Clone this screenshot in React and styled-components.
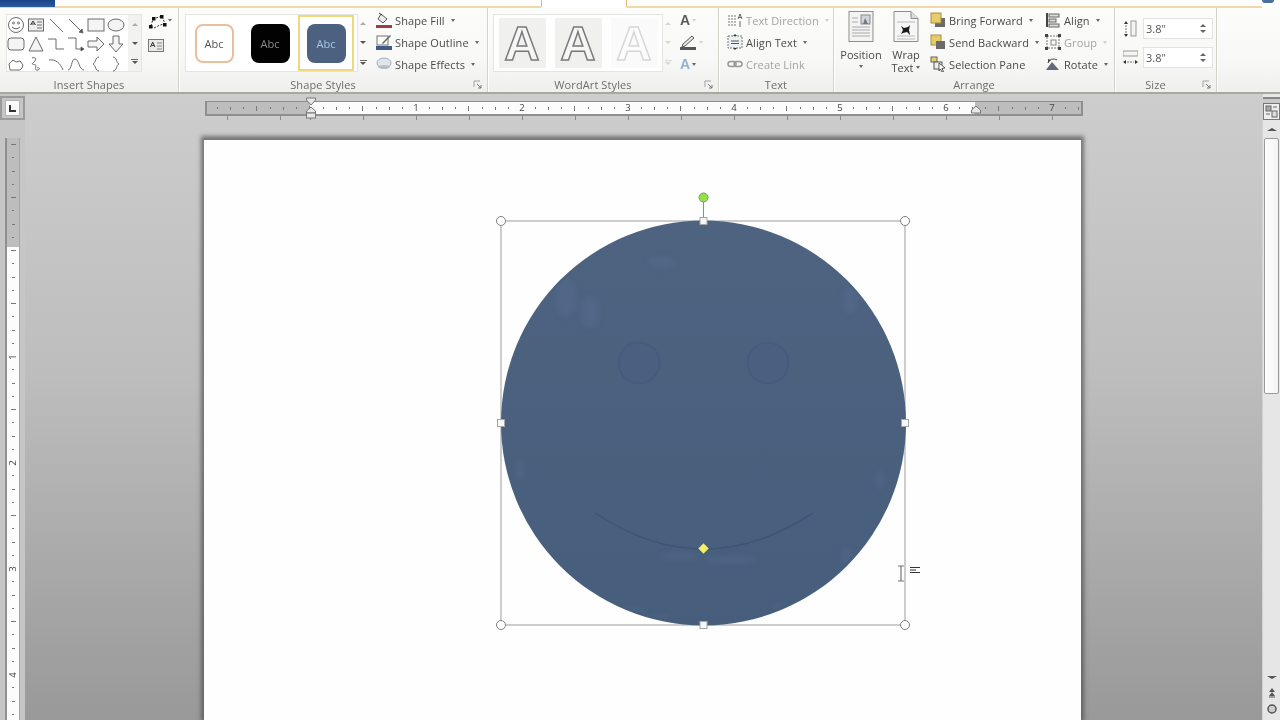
import styled, { createGlobalStyle } from "styled-components";

const GlobalStyle = createGlobalStyle`
  html, body {
    margin: 0;
    padding: 0;
    background: #bbb;
    font-family: "Open Sans", "Liberation Sans", sans-serif;
  }
`;

const Screen = styled.div`
  width: 1280px;
  height: 720px;
  overflow: hidden;
  display: flex;
  flex-direction: column;
`;

const TabStrip = styled.div`
  height: 8px;
  flex: none;
  display: flex;
  background: #fdfdfb;
  overflow: hidden;
`;

const FileTab = styled.div`
  width: 55px;
  background: linear-gradient(180deg, #1c4488, #2a5a9e);
  border-bottom: 1px solid #f0d6a8;
`;

const TabLine = styled.div`
  flex: ${({ $width }) => ($width ? `0 0 ${$width}px` : 1)};
  display: flex;
  border-bottom: 2px solid ${({ $open }) => ($open ? "transparent" : "#f2d7aa")};
  border-left: ${({ $open }) => ($open ? "1px solid #e2b878" : "none")};
  border-right: ${({ $open }) => ($open ? "1px solid #e2b878" : "none")};
  box-sizing: border-box;
  background: ${({ $open }) => ($open ? "#fff" : "transparent")};
`;

const HelpDot = styled.div`
  width: 12px;
  height: 3px;
  margin: 0 6px 0 0;
  border-radius: 0 0 6px 6px;
  background: #47709c;
`;

const Ribbon = styled.div`
  height: 86px;
  flex: none;
  display: flex;
  background: linear-gradient(180deg, #fcfcfb 0%, #f8f8f7 60%, #efefec 100%);
  border-bottom: 2px solid #a9a89c;
  box-sizing: border-box;
  filter: blur(0.35px);
`;

const Group = styled.div`
  width: ${({ $width }) => $width}px;
  flex: none;
  box-sizing: border-box;
  position: relative;
  display: flex;
  flex-direction: column;
  border-right: 1px solid #d4d3cb;
  box-shadow: 1px 0 0 #fff;
`;

const GroupBody = styled.div`
  height: 70px;
  flex: none;
  box-sizing: border-box;
  display: flex;
  align-items: flex-start;
  padding: 2px 0 0 ${({ $left }) => $left || 0}px;
`;

const GroupLabel = styled.div`
  height: 14px;
  line-height: 14px;
  text-align: center;
  font-size: 11px;
  letter-spacing: 0.1px;
  color: #6d6d6d;
  padding-right: ${({ $shift }) => $shift || 0}px;
`;

const Launcher = styled.svg`
  position: absolute;
  right: 5px;
  bottom: 3px;
  width: 9px;
  height: 9px;
`;

const GalleryBox = styled.div`
  margin: 4px 0 0 ${({ $left }) => $left || 0}px;
  height: 58px;
  flex: none;
  box-sizing: border-box;
  display: flex;
  background: #fff;
  border: 1px solid #e4e4e2;
  padding-right: ${({ $right }) => $right || 0}px;
`;

const ShapeGrid = styled.div`
  width: 121px;
  box-sizing: border-box;
  display: grid;
  grid-template-columns: repeat(6, 20px);
  grid-auto-rows: 19.6px;
  align-items: center;
  justify-items: start;
`;

const Scroller = styled.div`
  width: ${({ $plain }) => ($plain ? 10 : 13)}px;
  height: ${({ $outside }) => ($outside ? "58px" : "auto")};
  margin-top: ${({ $outside }) => ($outside ? "4px" : 0)};
  flex: none;
  display: flex;
  flex-direction: column;
  background: ${({ $plain }) => ($plain ? "transparent" : "#f2f2f0")};
`;

const ScrollCell = styled.div`
  flex: 1;
  display: flex;
  flex-direction: column;
  align-items: center;
  justify-content: center;
  gap: 1px;
  &:before {
    content: "";
    display: ${({ $bar }) => ($bar ? "block" : "none")};
    width: 7px;
    height: 1px;
    background: ${({ $faint }) => ($faint ? "#d8d8d8" : "#666")};
  }
`;

const Tri = styled.span`
  display: block;
  width: 0;
  height: 0;
  border-left: ${({ $size }) => $size || 3}px solid transparent;
  border-right: ${({ $size }) => $size || 3}px solid transparent;
  ${({ $up, $color }) =>
    $up
      ? `border-bottom: 3px solid ${$color || "#666"};`
      : `border-top: 3px solid ${$color || "#666"};`}
`;

const SideTools = styled.div`
  margin: 4px 0 0 6px;
  display: flex;
  flex-direction: column;
  gap: 6px;
  align-items: flex-start;
`;

const TextBoxGlyph = styled.svg`
  width: 16px;
  height: 13px;
  margin-top: 3px;
`;

const SwatchCell = styled.div`
  width: 56px;
  height: 56px;
  box-sizing: border-box;
  display: flex;
  align-items: center;
  justify-content: center;
  border: 2px solid ${({ $selected }) => ($selected ? "#efd77f" : "transparent")};
`;

const Swatch = styled.div`
  width: 39px;
  height: 39px;
  box-sizing: border-box;
  border-radius: 8px;
  display: flex;
  align-items: center;
  justify-content: center;
  font-size: 11px;
  background: ${({ $bg }) => $bg};
  color: ${({ $fg }) => $fg};
  border: ${({ $line }) => ($line ? `2px solid ${$line}` : "none")};
`;

const CommandList = styled.div`
  margin: -1px 0 0 ${({ $left }) => $left || 0}px;
  display: flex;
  flex-direction: column;
  flex: none;
`;

const Command = styled.div`
  height: 22px;
  display: flex;
  align-items: center;
  gap: 3px;
  font-size: 11px;
  letter-spacing: 0.1px;
  white-space: nowrap;
  color: ${({ $off }) => ($off ? "#a3a3a3" : "#4a4a4a")};
`;

const CommandIcon = styled.svg`
  width: 16px;
  height: 16px;
  flex: none;
`;

const CaretWrap = styled.span`
  margin-left: 3px;
`;

const ArtCell = styled.div`
  width: 47px;
  height: 50px;
  margin: 3px 4.5px;
  background: #f0f0ef;
  display: flex;
  align-items: center;
  justify-content: center;
  font-family: "Liberation Sans", sans-serif;
  font-weight: 700;
  font-size: 49px;
  line-height: 1;
  color: #f6f6f6;
  opacity: ${({ $fade }) => $fade || 1};
  -webkit-text-stroke: 1.5px #7a7a7a;
`;

const ArtTools = styled.div`
  margin: -1px 0 0 7px;
  display: flex;
  flex-direction: column;
`;

const ArtTool = styled.div`
  height: 22px;
  display: flex;
  align-items: center;
  gap: 2px;
  font-family: "Liberation Sans", sans-serif;
  font-weight: 700;
  font-size: 14px;
  color: ${({ $color }) => $color || "#5c5c5c"};
`;

const LargeButton = styled.div`
  width: ${({ $width }) => $width}px;
  flex: none;
  display: flex;
  flex-direction: column;
  align-items: center;
  font-size: 11px;
  line-height: 13px;
  color: #4a4a4a;
  padding-top: 1px;
`;

const LargeIcon = styled.svg`
  width: 26px;
  height: 32px;
  margin-bottom: 5px;
`;

const LargeCaret = styled.div`
  margin-top: 4px;
`;

const InlineCaret = styled.span`
  display: inline-flex;
  align-items: center;
  gap: 3px;
`;

const SizeRows = styled.div`
  height: 70px;
  flex: none;
  box-sizing: border-box;
  display: flex;
  flex-direction: column;
  gap: 8px;
  padding: 10px 0 0 8px;
`;

const SizeRow = styled.div`
  display: flex;
  align-items: center;
  gap: 5px;
`;

const SizeInput = styled.div`
  width: 70px;
  height: 21px;
  box-sizing: border-box;
  border: 1px solid #e2e2e0;
  background: #fff;
  display: flex;
  align-items: center;
  justify-content: space-between;
  padding: 0 6px 0 2px;
  font-size: 11px;
  color: #555;
`;

const Spin = styled.div`
  display: flex;
  flex-direction: column;
  gap: 3px;
`;

const RibbonRest = styled.div`
  flex: 1;
`;

const Workspace = styled.div`
  flex: 1;
  min-height: 0;
  display: flex;
  background: linear-gradient(180deg, #cdcdcd 0%, #bdbdbd 45%, #999 100%);
`;

const LeftRail = styled.div`
  width: 205px;
  flex: none;
`;

const RailStrip = styled.div`
  width: 25px;
  height: 100%;
  box-sizing: border-box;
  padding-top: 2px;
  display: flex;
  flex-direction: column;
  background: #c6c6c6;
  filter: blur(0.35px);
`;

const TabStopButton = styled.div`
  width: 25px;
  height: 24px;
  flex: none;
  box-sizing: border-box;
  border: 2px solid #9a9a9a;
  padding: 3px 4px;
`;

const TabStopFace = styled.div`
  height: 100%;
  background: #fafafa;
  box-shadow: 0 0 0 1px #b0b0b0;
  display: flex;
  align-items: center;
  justify-content: center;
`;

const TabGlyph = styled.div`
  width: 5px;
  height: 5px;
  border-left: 2px solid #333;
  border-bottom: 2px solid #333;
`;

const VRuler = styled.div`
  width: 15px;
  margin: 18px 0 0 5px;
  flex: 1;
  box-sizing: border-box;
  border-left: 2px solid #8f8f8f;
  border-right: 1px solid #a5a5a5;
  overflow: hidden;
  display: flex;
  flex-direction: column;
  background: linear-gradient(180deg, #bdbdbd 109px, #fcfcfc 109px);
`;

const VTick = styled.div`
  height: 13.25px;
  flex: none;
  display: flex;
  align-items: center;
  justify-content: center;
`;

const RulerNum = styled.span`
  font-size: 9.5px;
  line-height: 10px;
  color: #444;
  ${({ $vertical }) => ($vertical ? "transform: rotate(-90deg);" : "")}
`;

const Mark = styled.i`
  display: block;
  background: #777;
  width: ${({ $w }) => $w}px;
  height: ${({ $h }) => $h}px;
`;

const Center = styled.div`
  width: 878px;
  flex: none;
  display: flex;
  flex-direction: column;
  padding-top: 7px;
  box-sizing: border-box;
`;

const HRuler = styled.div`
  height: 15px;
  flex: none;
  box-sizing: border-box;
  border: 2px solid #8f8f8f;
  border-top-width: 1px;
  display: flex;
  padding-left: 3.6px;
  position: relative;
  background: linear-gradient(90deg, #bdbdbd 103px, #fcfcfc 103px, #fcfcfc 768px, #bdbdbd 768px);
  filter: blur(0.35px);
`;

const HTick = styled.div`
  width: 13.25px;
  flex: none;
  display: flex;
  align-items: center;
  justify-content: center;
`;

const Indent = styled.svg`
  position: absolute;
  top: -5px;
  left: ${({ $left }) => $left}px;
  width: 12px;
  height: 24px;
`;

const RulerFoot = styled.div`
  height: 4px;
  flex: none;
  background: repeating-linear-gradient(90deg, #8a8a8a 0 1px, transparent 1px 53px) 105px 0;
`;

const Page = styled.div`
  margin: 20px 2px 0 -1px;
  flex: 1;
  min-height: 0;
  box-sizing: border-box;
  padding: 49px 0 0 276px;
  background: #fefefe;
  box-shadow: 0 -1px 4px 3px rgba(70, 70, 70, 0.65);
`;

const ShapeCanvas = styled.svg`
  display: block;
  width: 450px;
  height: 460px;
`;

const RightGap = styled.div`
  flex: 1;
`;

const ScrollBar = styled.div`
  width: 18px;
  flex: none;
  box-sizing: border-box;
  display: flex;
  flex-direction: column;
  align-items: center;
  background: #e6e6e6;
  border-left: 1px solid #d2d2d2;
  filter: blur(0.3px);
`;

const SplitBar = styled.div`
  width: 100%;
  height: 6px;
  flex: none;
  box-sizing: border-box;
  border-top: 2px solid #888;
  margin-top: 3px;
  background: #c9c9c9;
`;

const ViewButton = styled.svg`
  width: 17px;
  height: 18px;
  flex: none;
`;

const ArrowCell = styled.div`
  height: ${({ $h }) => $h}px;
  flex: none;
  display: flex;
  align-items: center;
  justify-content: center;
`;

const Thumb = styled.div`
  width: 15px;
  height: 256px;
  flex: none;
  box-sizing: border-box;
  border: 1px solid #9a9a9a;
  border-radius: 2px;
  background: linear-gradient(90deg, #fff, #f2f2f2);
`;

const Track = styled.div`
  flex: 1;
`;

const BrowseIcon = styled.svg`
  width: 12px;
  height: 12px;
  flex: none;
`;

const stroke = { fill: "none", stroke: "#6a6a6a", strokeWidth: 1 };

const galleryShapes = [
  <g {...stroke}><circle cx="9" cy="9" r="7.5" /><circle cx="6.5" cy="7" r="1" /><circle cx="11.5" cy="7" r="1" /><path d="M5 11q4 3.5 8 0" /></g>,
  <g {...stroke}><rect x="1.5" y="3" width="15" height="12" fill="#eee" /><path d="M3.5 9l2.5-4 2.5 4M4.5 8h3" stroke="#333" /><path d="M10 6h5M10 9h5M10 12h5" /></g>,
  <g {...stroke}><path d="M3 3l13 13" /></g>,
  <g {...stroke}><path d="M2 3l13 13" /><path d="M16 17l-4-1 3-3z" fill="#555" /></g>,
  <g {...stroke}><rect x="1" y="3" width="16" height="12" fill="#f4f4f4" /></g>,
  <g {...stroke}><ellipse cx="9" cy="9" rx="8" ry="6" fill="#f4f4f4" /></g>,
  <g {...stroke}><rect x="1" y="3" width="16" height="12" rx="3" fill="#f4f4f4" /></g>,
  <g {...stroke}><path d="M9 2l7 14H2z" fill="#f4f4f4" /></g>,
  <g {...stroke}><path d="M1 4h8v10h8" /></g>,
  <g {...stroke}><path d="M1 3h8v11h6" /><path d="M17 14l-3-2v4z" fill="#333" /></g>,
  <g {...stroke}><path d="M1 6h9V2l7 7-7 7v-4H1z" fill="#f4f4f4" /></g>,
  <g {...stroke}><path d="M6 1h6v8h4l-7 8-7-8h4z" fill="#f4f4f4" /></g>,
  <g {...stroke}><path d="M3 15l-1-6 4-4 3 2 4-1 3 4-1 3-2 2z" /></g>,
  <g {...stroke}><path d="M5 3c5-2 4 3 1 5s4 1 3 3-1 5 2 4 1-3-1-2" /></g>,
  <g {...stroke}><path d="M2 5c7-1 11 3 14 10" /></g>,
  <g {...stroke}><path d="M1 15c4 0 3-11 7-11s4 11 9 11" /></g>,
  <g {...stroke}><path d="M12 2c-4 0-3 6-6 7 3 1 2 7 6 7" /></g>,
  <g {...stroke}><path d="M6 2c4 0 3 6 6 7-3 1-2 7-6 7" /></g>,
];

function Launch() {
  return (
    <Launcher viewBox="0 0 9 9">
      <path d="M1 7V1h6" fill="none" stroke="#a0a0a0" />
      <path d="M4 4l4 4M8 5v3H5" fill="none" stroke="#777" />
    </Launcher>
  );
}

function GalleryScroller({ faint, plain, outside }) {
  return (
    <Scroller $plain={plain} $outside={outside}>
      <ScrollCell><Tri $up $color={faint ? "#d8d8d8" : "#aaa"} /></ScrollCell>
      <ScrollCell><Tri $color={faint ? "#d8d8d8" : "#555"} /></ScrollCell>
      <ScrollCell $bar $faint={faint}><Tri $color={faint ? "#d8d8d8" : "#555"} /></ScrollCell>
    </Scroller>
  );
}

function Item({ label, off, caret, faintCaret, children }) {
  return (
    <Command $off={off}>
      <CommandIcon viewBox="0 0 16 16">{children}</CommandIcon>
      {label}
      {caret && (
        <CaretWrap>
          <Tri $size={2.5} $color={faintCaret ? "#cfcfcf" : "#666"} />
        </CaretWrap>
      )}
    </Command>
  );
}

function RulerMark({ k, vertical }) {
  if (k % 8 === 0 && k > 0) {
    return <RulerNum $vertical={vertical}>{k / 8}</RulerNum>;
  }
  const long = k % 4 === 0 ? 5 : k % 2 === 0 ? 3 : 1.5;
  return vertical ? <Mark $w={long} $h={1} /> : <Mark $w={1} $h={long} />;
}

const hTicks = Array.from({ length: 66 }, (_, i) => i - 7);
const vTicks = Array.from({ length: 46 }, (_, i) => i - 8);

function SmileyShape() {
  // canvas sits at x=480 y=189 on screen, coordinates below are screen ones
  const ox = 480;
  const oy = 189;
  const cx = 703.5 - ox;
  const cy = 423 - oy;
  const handles = [
    [501, 221], [905, 221], [501, 625], [905, 625],
  ];
  const sides = [
    [703.5, 221], [501, 423], [905, 423], [703.5, 625],
  ];
  const spots = [
    [566, 298, 11, 20], [590, 312, 10, 16], [662, 262, 14, 6], [846, 556, 6, 8],
    [632, 612, 14, 4], [660, 618, 10, 3], [520, 470, 4, 10], [730, 560, 26, 4],
    [680, 556, 20, 4], [780, 606, 8, 3], [850, 300, 8, 14], [880, 480, 4, 10],
  ];
  return (
    <ShapeCanvas viewBox="0 0 450 460">
      <defs>
        <filter id="soft"><feGaussianBlur stdDeviation="2.5" /></filter>
        <filter id="eyeSoft"><feGaussianBlur stdDeviation="0.7" /></filter>
        <clipPath id="face"><circle cx={cx} cy={cy} r="200" /></clipPath>
        <linearGradient id="faceFill" x1="0" y1="0" x2="0" y2="1">
          <stop offset="0" stopColor="#4e6380" />
          <stop offset="1" stopColor="#465e7c" />
        </linearGradient>
      </defs>
      <rect x={501 - ox} y={221 - oy} width="404" height="404" fill="none" stroke="#9c9c9c" />
      <circle cx={cx} cy={cy} r="202.5" fill="url(#faceFill)" />
      <g clipPath="url(#face)">
        <g filter="url(#soft)" fill="#5b7398" opacity="0.3">
          {spots.map(([x, y, rx, ry]) => (
            <ellipse key={`${x}-${y}`} cx={x - ox} cy={y - oy} rx={rx} ry={ry} />
          ))}
        </g>
      </g>
      <g filter="url(#eyeSoft)">
        <circle cx={639 - ox} cy={363 - oy} r="20.5" fill="#4b5f80" stroke="#475b7d" strokeWidth="2" />
        <circle cx={768 - ox} cy={363 - oy} r="20.5" fill="#4b5f80" stroke="#475b7d" strokeWidth="2" />
      </g>
      <path
        d={`M${595 - ox} ${513 - oy}Q${703 - ox} ${585 - oy} ${813 - ox} ${513 - oy}`}
        fill="none"
        stroke="#3d5575"
        strokeWidth="1.5"
      />
      <path d={`M${703.5 - ox} ${197 - oy}V${221 - oy}`} stroke="#8d8d8d" />
      <circle cx={703.5 - ox} cy={197.5 - oy} r="4.5" fill="#9adf4a" stroke="#7d9a6a" />
      <path
        d={`M${703.5 - ox} ${543.5 - oy}l5 5-5 5-5-5z`}
        fill="#f3ee62"
        stroke="#d9d88e"
        strokeWidth="0.5"
      />
      {handles.map(([x, y]) => (
        <circle key={`${x}-${y}`} cx={x - ox} cy={y - oy} r="4.5" fill="#fff" stroke="#7f7f7f" />
      ))}
      {sides.map(([x, y]) => (
        <rect key={`${x}-${y}`} x={x - ox - 3.5} y={y - oy - 3.5} width="7" height="7" fill="#f4f7fb" stroke="#a4a4a4" />
      ))}
      <path
        d={`M${898 - ox} ${566 - oy}h6M${901 - ox} ${566 - oy}v15M${898 - ox} ${581 - oy}h6`}
        fill="none"
        stroke="#777"
        strokeWidth="1.2"
      />
      <path
        d={`M${910 - ox} ${567.5 - oy}h10M${910 - ox} ${570 - oy}h6M${910 - ox} ${572.5 - oy}h10`}
        fill="none"
        stroke="#333"
      />
    </ShapeCanvas>
  );
}

export default function App() {
  return (
    <Screen>
      <GlobalStyle />
      <TabStrip>
        <FileTab />
        <TabLine $width={486} />
        <TabLine $open $width={86} />
        <TabLine />
        <HelpDot />
      </TabStrip>

      <Ribbon>
        <Group $width={179}>
          <GroupBody $left={6}>
            <GalleryBox>
              <ShapeGrid>
                {galleryShapes.map((shape, i) => (
                  <svg key={i} width="18" height="18" viewBox="0 0 18 18">{shape}</svg>
                ))}
              </ShapeGrid>
              <GalleryScroller />
            </GalleryBox>
            <SideTools>
              <svg width="24" height="16" viewBox="0 0 24 16">
                <path d="M3 12l2-7 9-3 3 8-5 1-6 3z" fill="none" stroke="#333" strokeDasharray="2 1.5" />
                <g fill="#111">
                  <rect x="1" y="11" width="3.5" height="3.5" />
                  <rect x="4" y="3" width="3.5" height="3.5" />
                  <rect x="12" y="1" width="3.5" height="3.5" />
                  <rect x="15" y="9" width="3.5" height="3.5" />
                </g>
                <path d="M20 5h4l-2 2.5z" fill="#666" />
              </svg>
              <TextBoxGlyph viewBox="0 0 16 13">
                <rect x=".5" y=".5" width="15" height="12" fill="#e9e9e9" stroke="#777" />
                <path d="M2.5 8l2.2-5 2.2 5M3.3 6.4h2.8" fill="none" stroke="#333" />
                <path d="M9 4h5M9 7h5M9 10h5" stroke="#888" />
              </TextBoxGlyph>
            </SideTools>
          </GroupBody>
          <GroupLabel>Insert Shapes</GroupLabel>
        </Group>

        <Group $width={309}>
          <GroupBody $left={6}>
            <GalleryBox $right={3}>
              <SwatchCell>
                <Swatch $bg="#fff" $fg="#555" $line="#eabf9d">Abc</Swatch>
              </SwatchCell>
              <SwatchCell>
                <Swatch $bg="#020202" $fg="#8a8a8a">Abc</Swatch>
              </SwatchCell>
              <SwatchCell $selected>
                <Swatch $bg="#4b617f" $fg="#a9c6e6">Abc</Swatch>
              </SwatchCell>
            </GalleryBox>
            <GalleryScroller plain outside />
            <CommandList $left={8}>
              <Item label="Shape Fill" caret>
                <path d="M5 2l6 5-4 4-5-4z" fill="#eee" stroke="#555" />
                <path d="M3 1l3 2" stroke="#333" />
                <rect x="0" y="13" width="16" height="3" fill="#a33a42" />
              </Item>
              <Item label="Shape Outline" caret>
                <rect x="1" y="2" width="11" height="9" fill="#fafafa" stroke="#777" />
                <path d="M6 9l8-8 1 1-8 8z" fill="#666" />
                <rect x="0" y="12" width="16" height="4" fill="#3f5c86" />
              </Item>
              <Item label="Shape Effects" caret>
                <ellipse cx="8" cy="7" rx="7" ry="5" fill="#dfe5ec" stroke="#a5adb8" />
                <ellipse cx="8" cy="11" rx="6" ry="2" fill="#aab3c0" opacity=".7" />
              </Item>
            </CommandList>
          </GroupBody>
          <GroupLabel $shift={20}>Shape Styles</GroupLabel>
          <Launch />
        </Group>

        <Group $width={231}>
          <GroupBody $left={5}>
            <GalleryBox>
              <ArtCell>A</ArtCell>
              <ArtCell>A</ArtCell>
              <ArtCell $fade={0.3}>A</ArtCell>
            </GalleryBox>
            <GalleryScroller faint plain outside />
            <ArtTools>
              <ArtTool>A<Tri $size={2} $color="#d5d5d5" /></ArtTool>
              <ArtTool>
                <svg width="17" height="16" viewBox="0 0 17 16">
                  <path d="M3 10l9-8 2 2-9 8-3 1z" fill="#e6e6e6" stroke="#555" />
                  <rect x="0" y="13" width="16" height="3" fill="#555" />
                </svg>
                <Tri $size={2} $color="#d5d5d5" />
              </ArtTool>
              <ArtTool $color="#8db2d6">A<Tri $size={2} $color="#666" /></ArtTool>
            </ArtTools>
          </GroupBody>
          <GroupLabel $shift={20}>WordArt Styles</GroupLabel>
          <Launch />
        </Group>

        <Group $width={115}>
          <GroupBody $left={8}>
            <CommandList>
              <Item label="Text Direction" off caret faintCaret>
                <path d="M2 3v11M5 3v11M8 3v11" stroke="#777" strokeDasharray="2 1" />
                <path d="M11 7l2-5 2 5M11.7 5.5h2.6M13 9v6" fill="none" stroke="#666" />
              </Item>
              <Item label="Align Text" caret>
                <rect x="1" y="2" width="14" height="12" fill="#eef1f5" stroke="#777" strokeDasharray="2 1" />
                <path d="M4 7h8M4 9.5h8" stroke="#555" />
                <path d="M8 0l2 2H6zM8 16l2-2H6z" fill="#333" />
              </Item>
              <Item label="Create Link" off>
                <rect x="1" y="5.5" width="8" height="5" rx="2.5" fill="none" stroke="#999" strokeWidth="1.5" />
                <rect x="7" y="5.5" width="8" height="5" rx="2.5" fill="none" stroke="#999" strokeWidth="1.5" />
              </Item>
            </CommandList>
          </GroupBody>
          <GroupLabel>Text</GroupLabel>
        </Group>

        <Group $width={281}>
          <GroupBody $left={4}>
            <LargeButton $width={46}>
              <LargeIcon viewBox="0 0 26 32">
                <rect x="1" y=".5" width="24" height="30" fill="#f4f4f4" stroke="#8d8d8d" />
                <path d="M4 7h6M4 11h6M4 16h18M4 19h18M4 22h18M4 25h18" stroke="#aaa" />
                <rect x="13" y="4" width="9" height="9" fill="#cfd5dc" stroke="#888" />
                <path d="M15 13l2-6 3 6z" fill="#777" />
              </LargeIcon>
              Position
              <LargeCaret><Tri $size={2.5} /></LargeCaret>
            </LargeButton>
            <LargeButton $width={44}>
              <LargeIcon viewBox="0 0 26 32">
                <path d="M1 .5h17l7 7v23H1z" fill="#f6f6f6" stroke="#8d8d8d" />
                <path d="M18 .5v7h7" fill="#ddd" stroke="#8d8d8d" />
                <path d="M4 11h18M4 25h18M4 28h18" stroke="#bbb" />
                <path d="M8 15l3 2 4-1 2-2-1 5 1 5-3-3-4 1-2 1 2-4z" fill="#1a1a1a" />
              </LargeIcon>
              Wrap
              <InlineCaret>Text <Tri $size={2.5} /></InlineCaret>
            </LargeButton>
            <CommandList $left={2}>
              <Item label="Bring Forward" caret>
                <rect x="5" y="6" width="10" height="9" fill="#6a6a6a" />
                <rect x="1" y="1" width="10" height="10" fill="#e7cc6d" stroke="#a88f3a" />
              </Item>
              <Item label="Send Backward" caret>
                <rect x="1" y="1" width="10" height="10" fill="#e7cc6d" stroke="#a88f3a" />
                <rect x="6" y="7" width="9" height="8" fill="#6a6a6a" />
              </Item>
              <Item label="Selection Pane">
                <rect x="1" y="1" width="6" height="5" fill="#e7cc6d" stroke="#666" />
                <rect x="4" y="6" width="8" height="7" fill="#eee" stroke="#555" />
                <path d="M9 7l6 5-3 .5 1.5 3-1.5.5-1.5-3L9 15z" fill="#fff" stroke="#333" strokeWidth=".8" />
              </Item>
            </CommandList>
            <CommandList $left={6}>
              <Item label="Align" caret>
                <path d="M2 1v14" stroke="#444" strokeWidth="2" />
                <rect x="4" y="2" width="10" height="3" fill="#ddd" stroke="#666" />
                <rect x="4" y="7" width="7" height="3" fill="#ddd" stroke="#666" />
                <rect x="4" y="12" width="10" height="3" fill="#ddd" stroke="#666" />
              </Item>
              <Item label="Group" off caret faintCaret>
                <rect x="2" y="2" width="12" height="12" fill="none" stroke="#777" strokeDasharray="2 1" />
                <rect x="6" y="6" width="5" height="5" fill="none" stroke="#888" />
                <g fill="#444">
                  <rect x="0" y="0" width="3" height="3" />
                  <rect x="13" y="0" width="3" height="3" />
                  <rect x="0" y="13" width="3" height="3" />
                  <rect x="13" y="13" width="3" height="3" />
                </g>
              </Item>
              <Item label="Rotate" caret>
                <path d="M1 14l6-8 7 8z" fill="#5e6a78" />
                <path d="M3 7c1-4 6-5 9-3" fill="none" stroke="#444" />
                <path d="M3 3l3 1-3 3z" fill="#444" />
              </Item>
            </CommandList>
          </GroupBody>
          <GroupLabel>Arrange</GroupLabel>
        </Group>

        <Group $width={102}>
          <SizeRows>
            <SizeRow>
              <svg width="15" height="18" viewBox="0 0 15 18">
                <rect x="8" y="1" width="5" height="15" fill="#f4f4f4" stroke="#999" />
                <path d="M3 1l2 3H1zM3 17l2-3H1z" fill="#333" />
                <path d="M3 5v8" stroke="#777" strokeDasharray="2 1" />
              </svg>
              <SizeInput>3.8"<Spin><Tri $up /><Tri /></Spin></SizeInput>
            </SizeRow>
            <SizeRow>
              <svg width="15" height="18" viewBox="0 0 15 18">
                <rect x="0" y="2" width="15" height="5" fill="#f4f4f4" stroke="#999" />
                <path d="M0 13l3-2v4zM15 13l-3-2v4z" fill="#333" />
                <path d="M4 13h7" stroke="#777" strokeDasharray="2 1" />
              </svg>
              <SizeInput>3.8"<Spin><Tri $up /><Tri /></Spin></SizeInput>
            </SizeRow>
          </SizeRows>
          <GroupLabel $shift={20}>Size</GroupLabel>
          <Launch />
        </Group>
        <RibbonRest />
      </Ribbon>

      <Workspace>
        <LeftRail>
          <RailStrip>
            <TabStopButton>
              <TabStopFace><TabGlyph /></TabStopFace>
            </TabStopButton>
            <VRuler>
              {vTicks.map((k) => (
                <VTick key={k}><RulerMark k={k} vertical /></VTick>
              ))}
            </VRuler>
          </RailStrip>
        </LeftRail>

        <Center>
          <HRuler>
            {hTicks.map((k) => (
              <HTick key={k}><RulerMark k={k} /></HTick>
            ))}
            <Indent $left={98} viewBox="0 0 12 24">
              <path d="M1.5 1h9v2L6 8 1.5 3z" fill="#e8e8e8" stroke="#777" />
              <path d="M6 10l4.5 4v2h-9v-2z" fill="#e8e8e8" stroke="#777" />
              <rect x="1.5" y="16" width="9" height="5" fill="#e8e8e8" stroke="#777" />
            </Indent>
            <Indent $left={763} viewBox="0 0 12 24">
              <path d="M6 9l4.5 4v3h-9v-3z" fill="#e8e8e8" stroke="#777" />
            </Indent>
          </HRuler>
          <RulerFoot />
          <Page>
            <SmileyShape />
          </Page>
        </Center>

        <RightGap />

        <ScrollBar>
          <SplitBar />
          <ViewButton viewBox="0 0 17 18">
            <rect x=".5" y=".5" width="16" height="16" fill="#eee" stroke="#777" />
            <rect x="3" y="3" width="5" height="5" fill="#aaa" stroke="#666" />
            <rect x="9" y="8" width="5" height="6" fill="#ddd" stroke="#666" />
            <path d="M3 11h4M10 4h4" stroke="#666" />
          </ViewButton>
          <ArrowCell $h={17}><Tri $up $size={5} $color="#555" /></ArrowCell>
          <Thumb />
          <Track />
          <ArrowCell $h={16}><Tri $size={5} $color="#555" /></ArrowCell>
          <ArrowCell $h={16}>
            <BrowseIcon viewBox="0 0 12 12">
              <path d="M6 1l3 4H3zM6 5l3 4H3z" fill="#555" />
              <path d="M3 10h6" stroke="#555" />
            </BrowseIcon>
          </ArrowCell>
          <ArrowCell $h={16}>
            <BrowseIcon viewBox="0 0 12 12">
              <circle cx="6" cy="6" r="4" fill="#ccc" stroke="#555" strokeWidth="1.5" />
            </BrowseIcon>
          </ArrowCell>
          <ArrowCell $h={3} />
        </ScrollBar>
      </Workspace>
    </Screen>
  );
}
